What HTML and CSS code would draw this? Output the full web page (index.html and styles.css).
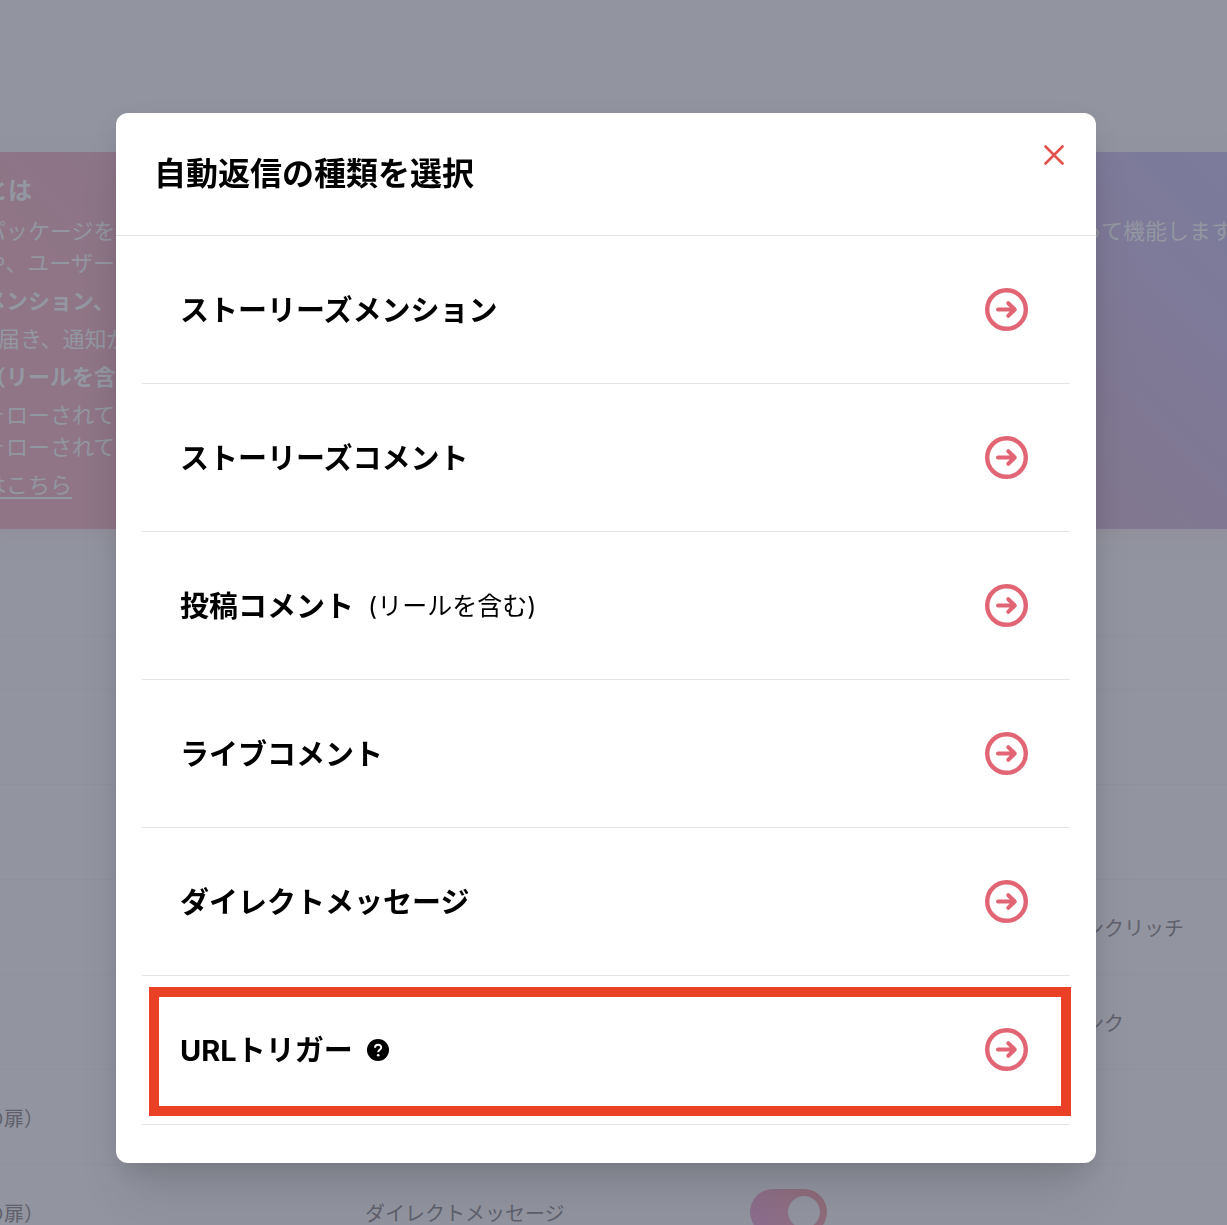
FILE: index.html
```html
<!DOCTYPE html>
<html lang="ja">
<head>
    <meta charset="UTF-8">
    <title>自動返信の種類を選択</title>
    <link rel="stylesheet" href="styles.css">
</head>
<body>
    <main class="page">
        <section class="banner">
            <h2>とは</h2>
            <div class="block">
                <p class="split"><span>パッケージを</span><span>って機能します</span></p>
                <p>や、ユーザー</p>
            </div>
            <h3>メンション、</h3>
            <p class="indent">届き、通知が</p>
            <h3>（リールを含</h3>
            <div class="block">
                <p>ォローされて</p>
                <p>ォローされて</p>
            </div>
            <p><a href="#">はこちら</a></p>
        </section>

        <table class="list">
            <colgroup>
                <col class="col-name">
                <col class="col-type">
                <col class="col-status">
                <col>
            </colgroup>
            <thead>
                <tr><th></th><th></th><th></th><th></th></tr>
            </thead>
            <tbody>
                <tr><td></td><td></td><td></td><td></td></tr>
                <tr><td></td><td></td><td></td><td></td></tr>
                <tr><td></td><td></td><td></td><td>ンクリッチ</td></tr>
                <tr><td></td><td></td><td></td><td>ンク</td></tr>
                <tr><td>の扉）</td><td></td><td></td><td></td></tr>
                <tr>
                    <td>の扉）</td>
                    <td>ダイレクトメッセージ</td>
                    <td><input class="toggle" type="checkbox" aria-label="有効" checked></td>
                    <td></td>
                </tr>
            </tbody>
        </table>
    </main>

    <svg class="defs" aria-hidden="true">
        <symbol id="arrow" viewBox="0 0 43 43">
            <circle cx="21.5" cy="21.5" r="19.3" stroke-width="4.4"/>
            <path d="M13 21.5h16.5M23.3 15.2l6.5 6.3-6.5 6.3" stroke-width="4"/>
        </symbol>
    </svg>

    <div class="overlay">
        <div class="modal" role="dialog" aria-modal="true" aria-labelledby="modal-title">
            <header class="modal-header">
                <h1 id="modal-title">自動返信の種類を選択</h1>
                <button class="close" type="button" aria-label="閉じる">
                    <svg viewBox="0 0 20 20"><path d="M1.5 1.5l17 17M18.5 1.5l-17 17"/></svg>
                </button>
            </header>
            <ul class="types">
                <li><button type="button"><span>ストーリーズメンション</span><svg class="arrow"><use href="#arrow"/></svg></button></li>
                <li><button type="button"><span>ストーリーズコメント</span><svg class="arrow"><use href="#arrow"/></svg></button></li>
                <li><button type="button"><span>投稿コメント</span><small>(リールを含む)</small><svg class="arrow"><use href="#arrow"/></svg></button></li>
                <li><button type="button"><span>ライブコメント</span><svg class="arrow"><use href="#arrow"/></svg></button></li>
                <li><button type="button"><span>ダイレクトメッセージ</span><svg class="arrow"><use href="#arrow"/></svg></button></li>
                <li class="highlight">
                    <button type="button">
                        <span>URLトリガー</span>
                        <svg class="help" viewBox="0 0 22 22">
                            <circle cx="11" cy="11" r="11"/>
                            <path d="M8 8.8c0-3.9 6.2-3.9 6.2-.3 0 2.3-3 2.3-3 4.7"/>
                            <circle class="dot" cx="11.2" cy="16.3" r="1.3"/>
                        </svg>
                        <svg class="arrow"><use href="#arrow"/></svg>
                    </button>
                </li>
            </ul>
        </div>
    </div>
</body>
</html>
```

FILE: styles.css
```css
* {
    box-sizing: border-box;
}

body {
    margin: 0;
    height: 100vh;
    overflow: hidden;
    background-color: #9295a0;
    color: #000;
    font-family: Inter, "Noto Sans CJK JP", sans-serif;
}

h1, h2, h3, p, ul {
    margin: 0;
    padding: 0;
}

button {
    padding: 0;
    border: none;
    background: none;
    color: inherit;
    font-family: inherit;
    cursor: pointer;
}

/* page behind the dialog */
.page {
    margin: 0 -16px;
    padding-top: 152px;
}

.banner {
    display: flex;
    flex-direction: column;
    gap: 6px;
    padding: 21px 10px 28px 0;
    background: linear-gradient(45deg, #8f7586 20%, #82778f 68%, #7e7a99 88%, #7b7b9c);
    box-shadow: 0 6px 24px rgba(143, 117, 134, 0.2);
    color: #9397a1;
    font-size: 22px;
    line-height: 32px;
    white-space: nowrap;
}

.banner h2 {
    font-size: 24px;
    line-height: 36px;
}

.banner h3 {
    font-size: 22px;
}

.banner a {
    color: inherit;
    text-underline-offset: 4px;
}

.split {
    display: flex;
    justify-content: space-between;
}

.indent {
    padding-left: 14px;
}

.list {
    width: 100%;
    margin-top: 107px;
    border-collapse: collapse;
    table-layout: fixed;
    color: #5f606c;
    font-size: 20px;
}

.col-name {
    width: 381px;
}

.col-type {
    width: 385px;
}

.col-status {
    width: 334px;
}

.list th {
    height: 53px;
    padding: 0;
    border-top: 1px solid #8e929d;
}

.list td {
    height: 95px;
    padding: 0;
    border-top: 1px solid #8e929d;
    white-space: nowrap;
}

.toggle {
    appearance: none;
    display: flex;
    align-items: center;
    justify-content: flex-end;
    width: 77px;
    height: 46px;
    margin: 0;
    padding: 7px;
    border-radius: 23px;
    background: linear-gradient(60deg, #8b6d91, #8f6f85 50%, #8f6a76);
}

.toggle::before {
    content: "";
    width: 32px;
    height: 32px;
    border-radius: 50%;
    background-color: #9295a0;
}

.defs {
    display: none;
}

/* dialog */
.overlay {
    position: fixed;
    inset: 0;
    padding: 113px 131px 62px 116px;
}

.modal {
    padding-bottom: 38px;
    background-color: #fff;
    border-radius: 12px;
    box-shadow: 0 40px 50px -10px rgba(0, 0, 0, 0.1), 0 10px 30px -4px rgba(0, 0, 0, 0.12);
}

.modal-header {
    display: flex;
    align-items: flex-start;
    justify-content: space-between;
    padding: 32px 32px 32px 38px;
    border-bottom: 1px solid #e5e5e8;
}

.modal-header h1 {
    font-size: 32px;
    line-height: 58px;
}

.close {
    display: flex;
}

.close svg {
    width: 20px;
    height: 20px;
    fill: none;
    stroke: #e2524b;
    stroke-width: 2.6;
    stroke-linecap: round;
}

.types {
    margin: 0 26px;
    list-style: none;
}

.types li {
    position: relative;
    border-bottom: 1px solid #e5e5e8;
}

.types button {
    display: flex;
    align-items: center;
    gap: 14px;
    width: 100%;
    height: 147px;
    padding: 0 42px 0 38px;
    font-size: 29px;
    font-weight: bold;
    text-align: left;
}

.types span,
.types small {
    padding-bottom: 4px;
}

.types small {
    font-size: 25px;
    font-weight: normal;
}

.arrow {
    width: 43px;
    height: 43px;
    margin-left: auto;
    fill: none;
    stroke: #e26575;
    stroke-linecap: round;
    stroke-linejoin: round;
}

.help {
    width: 22px;
    height: 22px;
}

.help path {
    fill: none;
    stroke: #fff;
    stroke-width: 2;
}

.help .dot {
    fill: #fff;
}

.types .highlight {
    padding-bottom: 1px;
}

.highlight::after {
    content: "";
    position: absolute;
    inset: 11px -1px 8px 7px;
    border: 10px solid #ea4026;
    pointer-events: none;
}
```
